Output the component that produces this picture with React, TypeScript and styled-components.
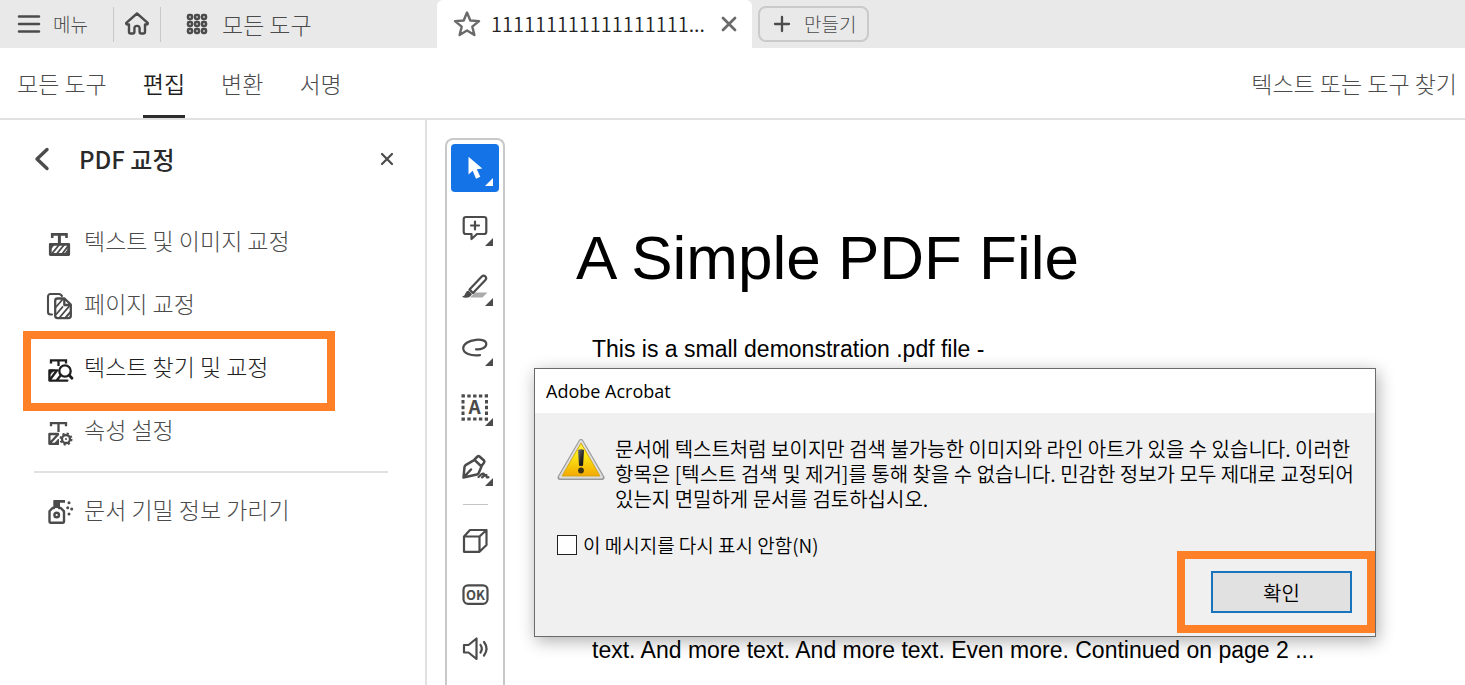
import React from 'react';
import styled, { createGlobalStyle, css } from 'styled-components';

const GlobalStyle = createGlobalStyle`
  * { box-sizing: border-box; }
  body {
    margin: 0;
    background: #fff;
    color: #4b4b4b;
    font-family: "Noto Sans CJK KR", "Noto Sans", sans-serif;
    font-weight: 300;
  }
  button {
    border: 0;
    padding: 0;
    background: none;
    color: inherit;
    font: inherit;
    cursor: pointer;
  }
  h1, h2, p, ul { margin: 0; padding: 0; }
  svg { display: block; flex: none; }
`;

const Page = styled.div`
  display: flex;
  flex-direction: column;
  min-height: 100vh;
`;

const TitleBar = styled.header`
  display: flex;
  align-items: center;
  height: 48px;
  background: #e9e9e9;
`;

const BarButton = styled.button<{ $large?: boolean }>`
  display: flex;
  align-items: center;
  gap: ${(p) => (p.$large ? 14 : 12)}px;
  font-size: ${(p) => (p.$large ? 23 : 19)}px;
  line-height: 28px;
`;

const MenuGroup = styled.div`
  display: flex;
  align-items: center;
  width: 437px;
  flex: none;
  padding-left: 17px;
`;

const HomeButton = styled.button`
  display: grid;
  place-items: center;
  width: 48px;
  height: 35px;
  margin: 0 25px 0 25px;
  border: solid #c8c8c8;
  border-width: 0 1px;
`;

const DocTab = styled.div`
  display: flex;
  align-items: center;
  width: 315px;
  height: 48px;
  flex: none;
  padding: 0 15px 0 16px;
  background: #fff;
  border-radius: 6px 6px 0 0;
`;

const TabName = styled.span`
  flex: 1;
  padding-left: 10px;
  color: #222;
  font-size: 20px;
  font-weight: 350;
  line-height: 28px;
  white-space: nowrap;
`;

const CreateButton = styled.button`
  display: flex;
  align-items: center;
  gap: 13px;
  height: 36px;
  margin-left: 6px;
  padding: 0 11px 0 13px;
  border: 2px solid #cacaca;
  border-radius: 8px;
  font-size: 19px;
  line-height: 28px;
  white-space: nowrap;
`;

const Nav = styled.nav`
  display: flex;
  align-items: stretch;
  height: 72px;
  padding: 0 8px 0 17px;
  border-bottom: 2px solid #e1e1e1;
  gap: 36px;
  font-size: 23px;
`;

const NavLink = styled.a<{ $active?: boolean }>`
  display: flex;
  align-items: center;
  padding-top: 3px;
  border-bottom: 3px solid ${(p) => (p.$active ? '#2c2c2c' : 'transparent')};
  color: ${(p) => (p.$active ? '#1f1f1f' : '#4b4b4b')};
  font-weight: ${(p) => (p.$active ? 350 : 300)};
  text-decoration: none;
  white-space: nowrap;
`;

const FindButton = styled.button`
  margin-left: auto;
  white-space: nowrap;
`;

const Workspace = styled.div`
  display: flex;
  flex: 1;
`;

const SidePanel = styled.aside`
  width: 427px;
  flex: none;
  border-right: 2px solid #e1e1e1;
`;

const PanelHead = styled.div`
  display: flex;
  align-items: center;
  height: 78px;
  padding: 0 30px 0 34px;
`;

const PanelTitle = styled.h2`
  flex: 1;
  padding-left: 29px;
  color: #2a2a2a;
  font-size: 24px;
  font-weight: 500;
  line-height: 32px;
`;

const ToolList = styled.ul`
  list-style: none;
  margin-top: 10px;
`;

const ToolItem = styled.li<{ $marked?: boolean }>`
  position: relative;
  height: 63px;
  ${(p) =>
    p.$marked &&
    css`
      color: #1f1f1f;
      &::after {
        content: '';
        position: absolute;
        inset: -3px 90px -14px 23px;
        border: 8px solid #ff8026;
        pointer-events: none;
      }
    `}
`;

const ToolButton = styled.button`
  display: flex;
  align-items: center;
  gap: 10px;
  width: 100%;
  height: 100%;
  padding-left: 46px;
  font-size: 23px;
  text-align: left;
`;

const PanelRule = styled.li`
  height: 2px;
  margin: 11px 37px 4px 34px;
  background: #e1e1e1;
`;

const Viewer = styled.main`
  position: relative;
  display: flex;
  flex: 1;
  min-width: 0;
`;

const Toolbar = styled.div`
  display: flex;
  flex-direction: column;
  align-items: center;
  width: 60px;
  flex: none;
  margin: 18px 0 0 18px;
  padding-top: 4px;
  border: solid #c9c9c9;
  border-width: 2px 2px 0;
  border-radius: 8px 8px 0 0;
`;

const ToolGroup = styled.div<{ $gap: number }>`
  display: flex;
  flex-direction: column;
  gap: ${(p) => p.$gap}px;
`;

const QuickTool = styled.button<{ $active?: boolean }>`
  width: 48px;
  height: 48px;
  border-radius: 4px;
  background: ${(p) => (p.$active ? '#1473e6' : 'transparent')};
  color: ${(p) => (p.$active ? '#fff' : '#4b4b4b')};
`;

const ToolbarRule = styled.div`
  width: 25px;
  height: 1px;
  margin: 12px 0;
  background: #c4c4c4;
`;

const Paper = styled.article`
  flex: 1;
  min-width: 0;
  padding: 102px 0 20px 71px;
  color: #000;
  font-family: "Liberation Sans", Arial, sans-serif;
  font-weight: 400;
`;

const PaperTitle = styled.h1`
  font-size: 62px;
  font-weight: 400;
  line-height: 72px;
  white-space: nowrap;
`;

const PaperLine = styled.p<{ $space: number }>`
  margin-top: ${(p) => p.$space}px;
  padding-left: 16px;
  font-size: 23px;
  line-height: 28px;
  white-space: nowrap;
`;

const Dialog = styled.section`
  position: absolute;
  top: 248px;
  left: 107px;
  right: 89px;
  border: 1px solid #6b6b6b;
  background: #f0f0f0;
  color: #000;
  font-weight: 350;
  box-shadow: 2px 4px 16px rgba(0, 0, 0, 0.32);
`;

const DialogTitle = styled.h2`
  height: 44px;
  padding-left: 11px;
  background: #fff;
  font-family: "Open Sans", "Noto Sans", sans-serif;
  font-size: 18px;
  font-weight: 400;
  line-height: 44px;
`;

const DialogMessage = styled.div`
  display: flex;
  gap: 10px;
  padding: 23px 8px 0 22px;
  font-size: 20px;
  line-height: 25px;
  word-break: keep-all;
`;

const CheckLabel = styled.label`
  display: flex;
  align-items: center;
  gap: 6px;
  margin: 22px 0 0 22px;
  font-size: 19px;
  line-height: 24px;
`;

const CheckBox = styled.input`
  appearance: none;
  width: 20px;
  height: 20px;
  margin: 0;
  border: 1px solid #222;
  background: #fff;
`;

const DialogActions = styled.div`
  display: flex;
  justify-content: flex-end;
  padding-bottom: 3px;
  margin-top: -6px;
`;

const ActionMark = styled.div`
  padding: 12px 15px 12px 26px;
  border: 8px solid #ff8026;
`;

const ConfirmButton = styled.button`
  width: 141px;
  height: 42px;
  border: 2px solid #1874bd;
  background: #e1e1e1;
  font-size: 20px;
`;

const Line = ({ size, w = 2, children, h }: { size: number; h?: number; w?: number; children: React.ReactNode }) => (
  <svg
    width={size}
    height={h ?? size}
    viewBox={`0 0 ${size} ${h ?? size}`}
    fill="none"
    stroke="currentColor"
    strokeWidth={w}
    strokeLinecap="round"
    strokeLinejoin="round"
    aria-hidden="true"
  >
    {children}
  </svg>
);

const EditTextIcon = () => (
  <Line size={28} h={36} w={2.2}>
    <path d="M6.200 16v-3.600h14.300V16" strokeLinecap="butt" strokeLinejoin="miter" strokeWidth="2.600" />
    <path d="M13.400 12v9" strokeLinecap="butt" strokeWidth="3" />
    <path d="M4.300 22.300h18.400v10.200H4.300z" strokeWidth="2.800" />
    <path d="M6 31.500l7-8.500M11 31.500l7-8.500M16.500 31.500l6-8" strokeWidth="1.900" />
    <path d="M4 28l4-5v-1H4zM22 28v4h-3z" fill="currentColor" strokeWidth="1" />
  </Line>
);

const EditPageIcon = () => (
  <Line size={28} h={36} w={2.1}>
    <path d="M6 29.500H4.500A2.500 2.500 0 0 1 2 27V11.500A2.500 2.500 0 0 1 4.500 9h8.500q1.500 0 3 2" />
    <path d="M11.500 13.500h7l6.300 6v11.300a2.300 2.300 0 0 1-2.300 2.300h-11a2.300 2.300 0 0 1-2.300-2.300v-15a2.300 2.300 0 0 1 2.300-2.300zM18.300 14v6h6" strokeWidth="2.300" />
    <path d="M10 22l6.500-7.500M10.500 29l6-7 M14 32l9-10.500M20 32l4.500-5" strokeWidth="1.900" />
  </Line>
);

const FindTextIcon = () => (
  <Line size={28} h={36} w={2.3}>
    <path d="M5 15.500v-3.200h15v3.200M12.500 12v6" strokeLinecap="butt" strokeLinejoin="miter" />
    <path d="M11.500 22.300H3.400v10.300h18M4.500 31l6-8M11 32l4-5" />
    <path d="M4 26v-4h4z" fill="currentColor" strokeWidth="1" />
    <circle cx="19" cy="23" r="5.700" />
    <path d="M23.200 27.200l2.800 3" strokeWidth="2.800" />
  </Line>
);

const PropertiesIcon = () => (
  <Line size={28} h={36} w={2.3}>
    <path d="M5 15.300v-3.200h15v3.200M12.500 12v9" strokeLinecap="butt" strokeLinejoin="miter" />
    <path d="M12 23H3.400v9.800h8.600M4.500 31.500l7.500-8" />
    <path d="M8 33l4.500-5v5z" fill="currentColor" strokeWidth="1" />
    <circle cx="20" cy="28" r="4" />
    <circle cx="20" cy="28" r="5.600" strokeDasharray="2.200 2.200" strokeLinecap="butt" strokeWidth="1.800" />
    <circle cx="20" cy="28" r="1" fill="currentColor" stroke="none" />
  </Line>
);

const SanitizeIcon = () => (
  <Line size={28} h={36} w={2.4}>
    <path d="M8 17H6.500l-3 3.300v10.500q0 .9.900.9h12.700q.9 0 .9-.9V20.300L14.800 17H13" />
    <path d="M8 9h11v2.800h-5V17H7.300V9.700q0-.7.700-.7z" fill="currentColor" stroke="none" />
    <circle cx="10.700" cy="24" r="2.300" />
    <g fill="currentColor" stroke="none">
      <circle cx="23" cy="11.700" r="1.500" />
      <circle cx="21.700" cy="16.700" r="1.500" />
      <circle cx="25.700" cy="18" r="1.500" />
      <circle cx="23" cy="23" r="1.500" />
    </g>
  </Line>
);

const Corner = () => <path d="M42 34v8h-8z" fill="currentColor" stroke="none" />;

const quickTools: { label: string; icon: React.ReactNode }[] = [
  { label: '선택', icon: <path d="M17.500 12.800V30.500l4.200-3.800 3.300 8 4.300-1.900-3.500-7.600 5.500-.6z" fill="currentColor" stroke="none" /> },
  { label: '메모 추가', icon: <path d="M15 13h18q2.300 0 2.300 2.300v12.400q0 2.300-2.300 2.300h-7l-5.500 5V30H15q-2.300 0-2.300-2.300V15.300Q12.700 13 15 13zM24 17.500v8M20 21.500h8" /> },
  {
    label: '강조 표시',
    icon: (
      <>
        <path d="M24 28.500h12.500l-5 5H19z" fill="#ababab" stroke="none" />
        <path d="M18.500 25.500L31 12.300q1.800-1.400 3.400.2 1.600 1.700 0 3.500L22 29z" />
        <path d="M17.500 26.500l3.500 3.600q-1.500 3.600-6 3.600-2.500 0-4-1 3-.8 3.200-3 1-2.900 3.300-3.200z" fill="currentColor" stroke="none" />
      </>
    ),
  },
  { label: '그리기', icon: <path d="M25 25.300c5 .5 10.300-1.600 10.300-5.300 0-3.500-5-4.700-10.300-4.200-7.500.8-12.800 4.200-12.800 8.500 0 5 7.500 8 16.800 6.800" /> },
  {
    label: '텍스트 상자',
    icon: (
      <>
        <path d="M10.500 12H37M10.500 35H37M12 10.200v26.600M35.500 10.200v26.600" strokeWidth="3" strokeDasharray="3.400 2.400" strokeLinecap="butt" />
        <text x="23.700" y="30.300" textAnchor="middle" fontSize="19" fontWeight="700" fontFamily="Noto Sans CJK KR" fill="currentColor" stroke="none">A</text>
      </>
    ),
  },
  {
    label: '서명',
    icon: (
      <>
        <path d="M12.500 33.500l1-10.500q.3-1.500 1.500-2.200l8.500-5 7 6.700-2.800 6.500q-.5 1.200-1.800 1.500zM12.500 33.500l7.500-8M23.500 15.500l3-3q1-.8 2 0l4.500 4q.9 1 0 2.200L30.500 22" strokeWidth="2.500" />
        <path d="M27.500 33q5-5 5.500-2.800-.3 2.500-2 3.200 4-3.400 4.500-2.200-.5 3 2 2" />
      </>
    ),
  },
];

const extraTools: { label: string; icon: React.ReactNode }[] = [
  { label: '3D 개체', icon: <path d="M13 19.500h15.500v15.300H13zM13 19.500l6-6.500h16.500v15l-7 6.800M28.500 19.500l7-6.500" /> },
  {
    label: '확인 단추',
    icon: (
      <>
        <rect x="12.500" y="14.300" width="24" height="18.500" rx="4.500" />
        <text x="24.500" y="28.500" textAnchor="middle" fontSize="13" fontWeight="700" fontFamily="Noto Sans CJK KR" fill="currentColor" stroke="none">OK</text>
      </>
    ),
  },
  { label: '사운드', icon: <path d="M13 20h4.500l8-6.500v20.500l-8-6.500H13zM29.500 20q2.600 3.800 0 7.500M33 17q5 6.500 0 13.500" /> },
];

const panelTools = [
  { label: '텍스트 및 이미지 교정', icon: <EditTextIcon /> },
  { label: '페이지 교정', icon: <EditPageIcon /> },
  { label: '텍스트 찾기 및 교정', icon: <FindTextIcon />, marked: true },
  { label: '속성 설정', icon: <PropertiesIcon /> },
];

const WarningIcon = () => (
  <svg width="48" height="48" viewBox="0 0 48 48" aria-hidden="true">
    <defs>
      <linearGradient id="warn" x1="0" y1="0" x2="0" y2="1">
        <stop offset="0" stopColor="#fff34a" />
        <stop offset=".4" stopColor="#fbe616" />
        <stop offset="1" stopColor="#f3a800" />
      </linearGradient>
      <linearGradient id="mark" x1="0" y1="0" x2="1" y2="1">
        <stop offset="0" stopColor="#777" />
        <stop offset=".6" stopColor="#222" />
        <stop offset="1" stopColor="#111" />
      </linearGradient>
    </defs>
    <path d="M24 5.500L45 41.500H3z" fill="#999" stroke="#999" strokeWidth="5" strokeLinejoin="round" />
    <path d="M24 5.500L44.500 41H3.500z" fill="#ddd" stroke="#ddd" strokeWidth="3" strokeLinejoin="round" />
    <path d="M24 7L43 40H5z" fill="url(#warn)" stroke="#d6a91a" strokeWidth="1" strokeLinejoin="round" />
    <path d="M21 14q3-1.500 6 0l-1 15.500q-2 1-4 0z" fill="url(#mark)" />
    <circle cx="24" cy="34.500" r="2.900" fill="#3b3312" />
  </svg>
);

export default function App() {
  return (
    <Page>
      <GlobalStyle />
      <TitleBar>
        <MenuGroup>
          <BarButton>
            <Line size={24} w={2.5}><path d="M2 4.500h20M2 12h20M2 19.500h20" /></Line>
            메뉴
          </BarButton>
          <HomeButton aria-label="홈">
            <Line size={26} w={2.4}>
              <path d="M13 2.500L2.300 11.800q-.5 1.700 1.300 1.700H5v7.800q0 1.200 1.200 1.200h3q1.200 0 1.200-1.200V17.500q0-2.600 2.600-2.600t2.600 2.600v3.800q0 1.200 1.200 1.200h3q1.200 0 1.200-1.200v-7.800h1.400q1.800 0 1.300-1.700z" />
            </Line>
          </HomeButton>
          <BarButton $large>
            <Line size={22} w={2.5}>
              {[4, 11, 18].map((y) => [4, 11, 18].map((x) => <rect key={`${x}-${y}`} x={x - 2} y={y - 2} width="4" height="4" rx="1.200" />))}
            </Line>
            모든 도구
          </BarButton>
        </MenuGroup>
        <DocTab>
          <Line size={28} w={2.4}>
            <path d="M14 2.500l3.300 8 8.700.6-6.700 5.500 2.100 8.400L14 20.400 6.600 25l2.100-8.400L2 11.100l8.700-.6z" stroke="#6a6a6a" />
          </Line>
          <TabName>111111111111111111...</TabName>
          <BarButton aria-label="탭 닫기">
            <Line size={16} w={2.8}><path d="M2 2l12 12M14 2L2 14" stroke="#6a6a6a" /></Line>
          </BarButton>
        </DocTab>
        <CreateButton>
          <Line size={18} w={2.3}><path d="M2 9h14M9 2v14" /></Line>
          만들기
        </CreateButton>
      </TitleBar>

      <Nav>
        <NavLink href="#all">모든 도구</NavLink>
        <NavLink href="#edit" $active>편집</NavLink>
        <NavLink href="#convert">변환</NavLink>
        <NavLink href="#sign">서명</NavLink>
        <FindButton>텍스트 또는 도구 찾기</FindButton>
      </Nav>

      <Workspace>
        <SidePanel>
          <PanelHead>
            <BarButton aria-label="뒤로">
              <Line size={16} h={24} w={3.4}><path d="M13 2.500L3 12l10 9.500" /></Line>
            </BarButton>
            <PanelTitle>PDF 교정</PanelTitle>
            <BarButton aria-label="닫기">
              <Line size={16} w={2.2}><path d="M3 3l10 10M13 3L3 13" /></Line>
            </BarButton>
          </PanelHead>
          <ToolList>
            {panelTools.map((t) => (
              <ToolItem key={t.label} $marked={t.marked}>
                <ToolButton>{t.icon}{t.label}</ToolButton>
              </ToolItem>
            ))}
            <PanelRule role="separator" />
            <ToolItem>
              <ToolButton><SanitizeIcon />문서 기밀 정보 가리기</ToolButton>
            </ToolItem>
          </ToolList>
        </SidePanel>

        <Viewer>
          <Toolbar>
            <ToolGroup $gap={12}>
              {quickTools.map((t, i) => (
                <QuickTool key={t.label} aria-label={t.label} $active={i === 0}>
                  <Line size={48} w={2.2}>{t.icon}<Corner /></Line>
                </QuickTool>
              ))}
            </ToolGroup>
            <ToolbarRule />
            <ToolGroup $gap={6}>
              {extraTools.map((t) => (
                <QuickTool key={t.label} aria-label={t.label}>
                  <Line size={48} w={2.2}>{t.icon}</Line>
                </QuickTool>
              ))}
            </ToolGroup>
          </Toolbar>
          <Paper>
            <PaperTitle>A Simple PDF File</PaperTitle>
            <PaperLine $space={41}>This is a small demonstration .pdf file -</PaperLine>
            <PaperLine $space={273}>text. And more text. And more text. Even more. Continued on page 2 ...</PaperLine>
          </Paper>
          <Dialog role="dialog" aria-labelledby="dialog-title">
            <DialogTitle id="dialog-title">Adobe Acrobat</DialogTitle>
            <DialogMessage>
              <WarningIcon />
              <p>
                문서에 텍스트처럼 보이지만 검색 불가능한 이미지와 라인 아트가 있을 수 있습니다. 이러한 항목은 [텍스트
                검색 및 제거]를 통해 찾을 수 없습니다. 민감한 정보가 모두 제대로 교정되어 있는지 면밀하게 문서를
                검토하십시오.
              </p>
            </DialogMessage>
            <CheckLabel>
              <CheckBox type="checkbox" />
              이 메시지를 다시 표시 안함(N)
            </CheckLabel>
            <DialogActions>
              <ActionMark>
                <ConfirmButton>확인</ConfirmButton>
              </ActionMark>
            </DialogActions>
          </Dialog>
        </Viewer>
      </Workspace>
    </Page>
  );
}
